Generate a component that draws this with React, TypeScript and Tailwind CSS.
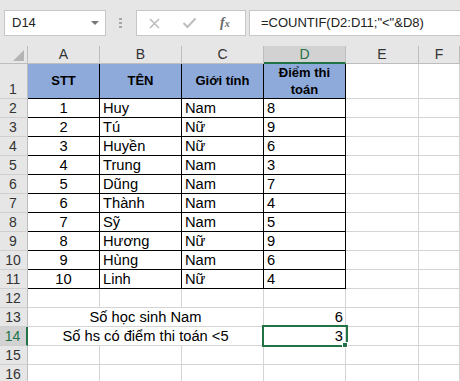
import React from "react";

type Cell = {
  t?: React.ReactNode;
  w: string;
  cls?: string;
};

const data: [string, string, string, string][] = [
  ["1", "Huy", "Nam", "8"],
  ["2", "Tú", "Nữ", "9"],
  ["3", "Huyền", "Nữ", "6"],
  ["4", "Trung", "Nam", "3"],
  ["5", "Dũng", "Nam", "7"],
  ["6", "Thành", "Nam", "4"],
  ["7", "Sỹ", "Nam", "5"],
  ["8", "Hương", "Nữ", "9"],
  ["9", "Hùng", "Nam", "6"],
  ["10", "Linh", "Nữ", "4"],
];

const grid = "border-r border-b border-[#d4d4d4]";
const black = "border-r border-b border-black";

function RowHead({ n, active }: { n: number; active?: boolean }) {
  return (
    <div
      className={`w-[28px] shrink-0 flex items-end justify-center pr-[1px] text-[14px] leading-[17px] border-b border-[#cfcfcf] ${
        active
          ? "bg-[#d2d2d2] text-[#217346] border-r-2 border-r-[#217346]"
          : "bg-[#e6e6e6] text-[#333] border-r border-r-[#bdbdbd]"
      }`}
    >
      {n}
    </div>
  );
}

function Row({ n, h, cells, active }: { n: number; h: string; cells: Cell[]; active?: boolean }) {
  return (
    <div className={`flex ${h}`}>
      <RowHead n={n} active={active} />
      {cells.map((c, i) => (
        <div key={i} className={`${c.w} shrink-0 flex ${c.cls ?? grid}`}>
          {c.t}
        </div>
      ))}
    </div>
  );
}

const cellText = "text-[14.7px] leading-[17px]";

export default function App() {
  return (
    <div className="w-[460px] h-[381px] overflow-hidden bg-white text-black font-['Liberation_Sans',Arial,sans-serif]">
      {/* formula bar */}
      <div className="h-[46px] bg-[#e6e6e6] flex items-start pt-[10px] pl-[4px]">
        <div className="w-[102px] h-[26px] shrink-0 bg-white border border-[#c6c6c6] flex items-center justify-between pl-[7px] pr-[6px] text-[13px] text-[#222]">
          <span>D14</span>
          <span className="w-0 h-0 border-l-[4px] border-r-[4px] border-t-[4px] border-l-transparent border-r-transparent border-t-[#777]" />
        </div>
        <div className="ml-[13px] mt-[8px] flex flex-col gap-[2px]">
          <span className="w-[3px] h-[2px] bg-[#a6a6a6]" />
          <span className="w-[3px] h-[2px] bg-[#a6a6a6]" />
          <span className="w-[3px] h-[2px] bg-[#a6a6a6]" />
        </div>
        <div className="ml-[14px] w-[110px] h-[26px] shrink-0 bg-white border border-[#c6c6c6] flex items-center">
          <svg className="ml-[11px]" width="13" height="13" viewBox="0 0 13 13">
            <path d="M2 2 L11 11 M11 2 L2 11" stroke="#bdbdbd" strokeWidth="1.6" fill="none" />
          </svg>
          <svg className="ml-[21px]" width="15" height="12" viewBox="0 0 15 12">
            <path d="M1.5 6 L5.5 10 L13.5 1.5" stroke="#bdbdbd" strokeWidth="2" fill="none" />
          </svg>
          <span className="ml-[23px] text-[14px] italic font-bold text-[#6a6a6a] font-['Liberation_Serif',serif] leading-none">
            f<span className="text-[10px]">x</span>
          </span>
        </div>
        <div className="ml-[3px] flex-1 h-[26px] bg-white border-y border-l border-[#c6c6c6] flex items-center pl-[11px] text-[13px] text-[#222] whitespace-nowrap">
          =COUNTIF(D2:D11;"&lt;"&amp;D8)
        </div>
      </div>

      {/* column headers */}
      <div className="flex h-[18px] bg-[#e6e6e6] text-[14px] text-[#333]">
        <div className="w-[28px] shrink-0 border-r border-b border-[#bdbdbd] relative">
          <span className="absolute left-[13px] top-[4px] w-0 h-0 border-l-[11px] border-t-[11px] border-l-transparent border-t-transparent border-b-0 border-r-0" />
          <svg className="absolute left-[13px] top-[4px]" width="11" height="11" viewBox="0 0 11 11">
            <path d="M11 0 L11 11 L0 11 Z" fill="#b4b4b4" />
          </svg>
        </div>
        {[
          ["A", "w-[72px]"],
          ["B", "w-[82px]"],
          ["C", "w-[82px]"],
          ["D", "w-[82px]"],
          ["E", "w-[73px]"],
          ["F", "flex-1"],
        ].map(([l, w]) =>
          l === "D" ? (
            <div key={l} className={`${w} shrink-0 flex items-center justify-center bg-[#d2d2d2] text-[#217346] border-r border-r-[#bdbdbd] border-b-2 border-b-[#217346]`}>
              {l}
            </div>
          ) : (
            <div key={l} className={`${w} shrink-0 flex items-center justify-center border-r border-b border-[#bdbdbd]`}>
              {l}
            </div>
          )
        )}
      </div>

      {/* row 1 - table head */}
      <Row
        n={1}
        h="h-[35px]"
        cells={[
          { w: "w-[72px]", cls: `${black} bg-[#8eaadb] items-center justify-center`, t: <span className="text-[13px] font-bold">STT</span> },
          { w: "w-[82px]", cls: `${black} bg-[#8eaadb] items-center justify-center`, t: <span className="text-[13px] font-bold">TÊN</span> },
          { w: "w-[82px]", cls: `${black} bg-[#8eaadb] items-center justify-center`, t: <span className="text-[13px] font-bold">Giới tính</span> },
          {
            w: "w-[82px]",
            cls: `${black} bg-[#8eaadb] items-center justify-center`,
            t: <span className="text-[13px] font-bold text-center leading-[17px]">Điểm thi<br />toán</span>,
          },
          { w: "w-[73px]" },
          { w: "flex-1" },
        ]}
      />

      {data.map((r, i) => (
        <Row
          key={i}
          n={i + 2}
          h="h-[19px]"
          cells={[
            { w: "w-[72px]", cls: `${black} items-end justify-center ${cellText}`, t: r[0] },
            { w: "w-[82px]", cls: `${black} items-end pl-[3px] ${cellText}`, t: r[1] },
            { w: "w-[82px]", cls: `${black} items-end pl-[3px] ${cellText}`, t: r[2] },
            { w: "w-[82px]", cls: `${black} items-end pl-[3px] ${cellText}`, t: r[3] },
            { w: "w-[73px]" },
            { w: "flex-1" },
          ]}
        />
      ))}

      <Row
        n={12}
        h="h-[19px]"
        cells={[
          { w: "w-[72px]" },
          { w: "w-[82px]" },
          { w: "w-[82px]" },
          { w: "w-[82px]" },
          { w: "w-[73px]" },
          { w: "flex-1" },
        ]}
      />
      <Row
        n={13}
        h="h-[19px]"
        cells={[
          { w: "w-[236px]", cls: `${grid} items-end justify-center ${cellText}`, t: "Số học sinh Nam" },
          { w: "w-[82px]", cls: `${grid} items-end justify-end pr-[2px] ${cellText}`, t: "6" },
          { w: "w-[73px]" },
          { w: "flex-1" },
        ]}
      />
      <Row
        n={14}
        h="h-[19px]"
        active
        cells={[
          { w: "w-[236px]", cls: `${grid} items-end justify-center whitespace-nowrap ${cellText}`, t: "Số hs có điểm thi toán <5" },
          {
            w: "w-[82px]",
            cls: `${grid} relative items-end justify-end pr-[2px] ${cellText}`,
            t: (
              <>
                3
                <span className="absolute -left-[2px] -top-[2px] w-[86px] h-[22px] border-2 border-[#217346]" />
                <span className="absolute -right-[3px] -bottom-[3px] w-[6px] h-[6px] bg-[#217346] border border-white" />
              </>
            ),
          },
          { w: "w-[73px]" },
          { w: "flex-1" },
        ]}
      />
      <Row
        n={15}
        h="h-[19px]"
        cells={[
          { w: "w-[72px]" },
          { w: "w-[82px]" },
          { w: "w-[82px]" },
          { w: "w-[82px]" },
          { w: "w-[73px]" },
          { w: "flex-1" },
        ]}
      />
      <Row
        n={16}
        h="h-[19px]"
        cells={[
          { w: "w-[72px]" },
          { w: "w-[82px]" },
          { w: "w-[82px]" },
          { w: "w-[82px]" },
          { w: "w-[73px]" },
          { w: "flex-1" },
        ]}
      />
    </div>
  );
}
